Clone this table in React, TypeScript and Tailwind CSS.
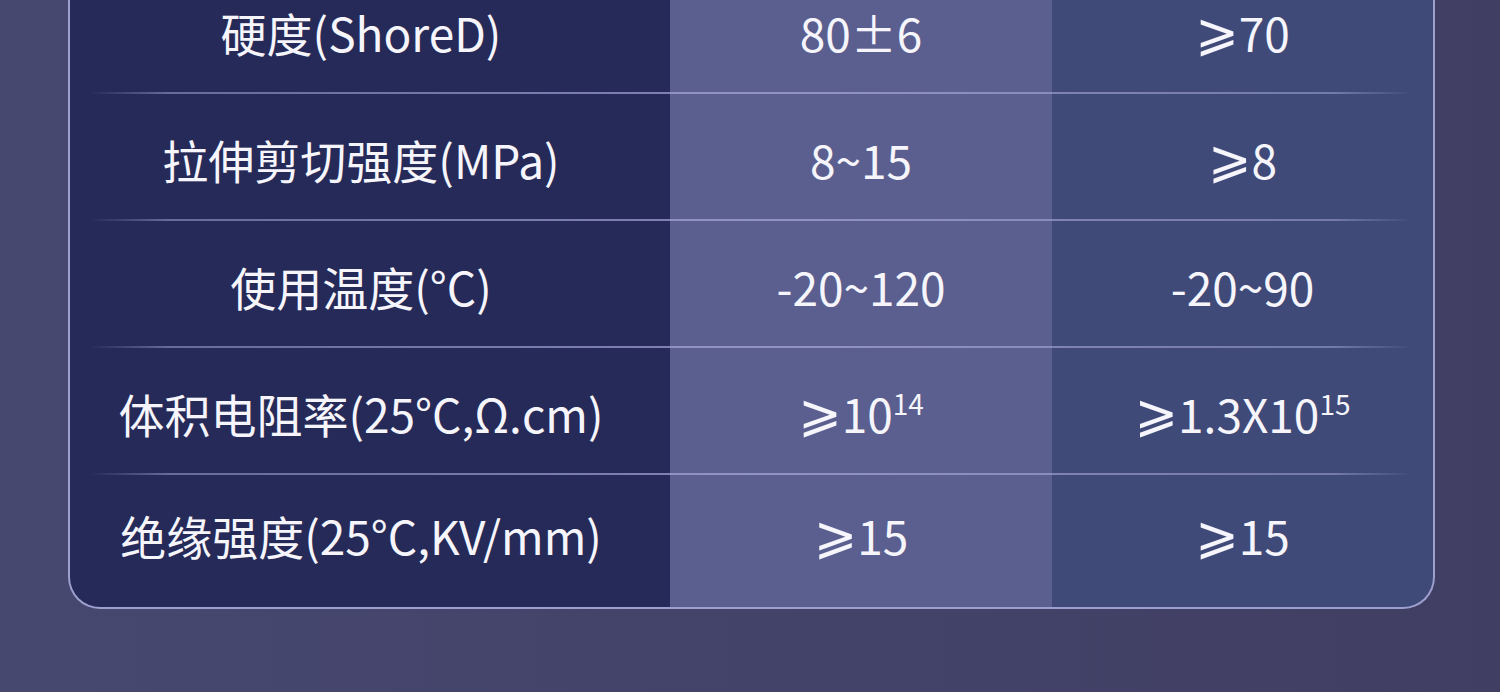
import React from 'react';

type Cell = React.ReactNode;

interface Row {
  name: string;
  a: Cell;
  b: Cell;
}

// slanted "greater or equal" sign, drawn from DejaVu which carries it
const Ge: React.FC = () => (
  <span className="align-[2px] font-['DejaVu_Sans','Noto_Sans_CJK_SC',sans-serif] text-[52px] leading-none">⩾</span>
);

const Exp: React.FC<{ children: React.ReactNode }> = ({ children }) => (
  <span className="align-[18px] text-[28px] leading-none">{children}</span>
);

const rows: Row[] = [
  { name: '硬度(ShoreD)', a: '80±6', b: <><Ge />70</> },
  { name: '拉伸剪切强度(MPa)', a: '8~15', b: <><Ge />8</> },
  { name: '使用温度(°C)', a: '-20~120', b: '-20~90' },
  {
    name: '体积电阻率(25°C,Ω.cm)',
    a: <><Ge />10<Exp>14</Exp></>,
    b: <><Ge />1.3X10<Exp>15</Exp></>,
  },
  { name: '绝缘强度(25°C,KV/mm)', a: <><Ge />15</>, b: <><Ge />15</> },
];

const Divider: React.FC = () => (
  <div className="h-[2px] mx-[20px] bg-[linear-gradient(to_right,rgba(160,162,210,0)_0%,rgba(160,162,210,0.55)_6%,rgba(170,170,220,0.7)_50%,rgba(160,162,210,0.55)_94%,rgba(160,162,210,0)_100%)]" />
);

export default function App() {
  return (
    <div className="h-[692px] w-[1500px] overflow-hidden bg-[linear-gradient(to_right,#464870,#413e63)] font-['Noto_Sans_CJK_SC',sans-serif] text-[#f5f5fb]">
      {/* table card, its header runs above the top of the shot */}
      <div className="ml-[68px] -mt-[33px] w-[1367px] border-2 border-t-0 border-[#9d9fcd] rounded-b-[32px] overflow-hidden bg-[linear-gradient(to_right,#262a58_0px,#262a58_600px,#5b5f8f_600px,#5b5f8f_982px,#404a79_982px)]">
        {rows.map((r, i) => (
          <React.Fragment key={r.name}>
            <div className={`grid grid-cols-[600px_382px_1fr] items-center text-[46px] leading-none ${i === rows.length - 1 ? 'h-[132px] pb-[12px]' : 'h-[125px] pt-[5px]'}`}>
              <div className="text-center pr-[18px]">{r.name}</div>
              <div className="text-center">{r.a}</div>
              <div className="text-center">{r.b}</div>
            </div>
            {i < rows.length - 1 && <Divider />}
          </React.Fragment>
        ))}
      </div>
    </div>
  );
}
